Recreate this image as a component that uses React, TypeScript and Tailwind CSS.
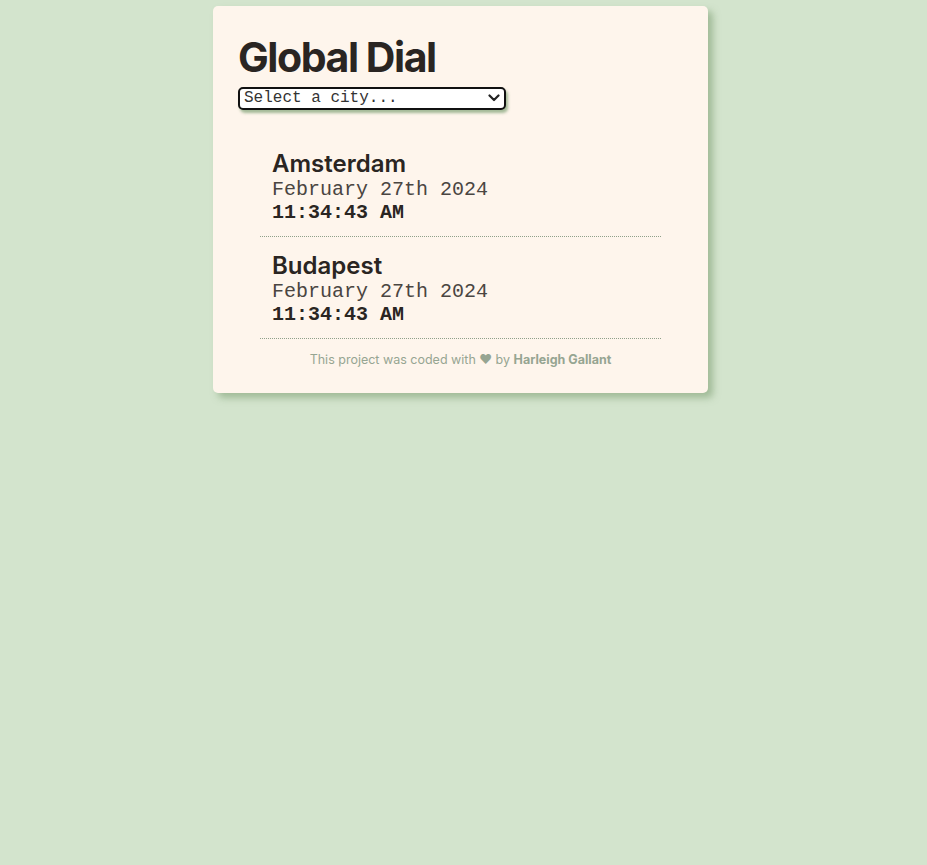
import React from "react";

const cities = [
  { name: "Amsterdam", date: "February 27th 2024", time: "11:34:43 AM" },
  { name: "Budapest", date: "February 27th 2024", time: "11:34:43 AM" },
];

export default function App() {
  return (
    <div className="min-h-[865px] w-full bg-[#d3e4cd] pt-[6px]">
      <div className="ml-[213px] w-[495px] rounded-[5px] bg-[#fef5ec] px-[25px] pt-[28px] pb-[24px] shadow-[5px_5px_7px_rgba(140,170,130,0.7)] text-[#2a2522]">
        <h1 className="font-['Inter',sans-serif] text-[41px] leading-[46px] font-bold tracking-[-0.035em]">
          Global Dial
        </h1>
        <div className="relative mt-[7px] w-[268px]">
          <select
            className="block h-[23px] w-full appearance-none rounded-[5px] border-2 border-[#111] bg-white pl-[4px] font-['Liberation_Mono',monospace] text-[16px] leading-[19px] text-[#333] shadow-[2px_3px_3px_rgba(140,170,130,0.8)] outline-none"
            defaultValue=""
          >
            <option value="">Select a city...</option>
          </select>
          <svg
            className="pointer-events-none absolute right-[6px] top-[7px]"
            width="12"
            height="8"
            viewBox="0 0 12 8"
          >
            <path d="M1.5 1.5 L6 6 L10.5 1.5" fill="none" stroke="#222" strokeWidth="2.2" strokeLinecap="round" strokeLinejoin="round" />
          </svg>
        </div>
        <div className="mx-[22px] mt-[25px]">
          {cities.map((c) => (
            <div key={c.name} className="border-b border-dotted border-[#8fa08a] pl-[12px] pt-[15px] pb-[12px]">
              <div className="font-['Inter',sans-serif] text-[24px] leading-[28px] font-semibold">
                {c.name}
              </div>
              <div className="font-['Liberation_Mono',monospace] text-[20px] leading-[24px] text-[#4a4541]">
                {c.date}
              </div>
              <div className="font-['Liberation_Mono',monospace] text-[20px] leading-[22px] font-bold">
                {c.time}
              </div>
            </div>
          ))}
        </div>
        <p className="mt-[12px] text-center font-['Inter',sans-serif] text-[12.5px] leading-[18px] text-[#96a592]">
          This project was coded with <span>♥</span> by{" "}
          <span className="font-bold">Harleigh Gallant</span>
        </p>
      </div>
    </div>
  );
}
